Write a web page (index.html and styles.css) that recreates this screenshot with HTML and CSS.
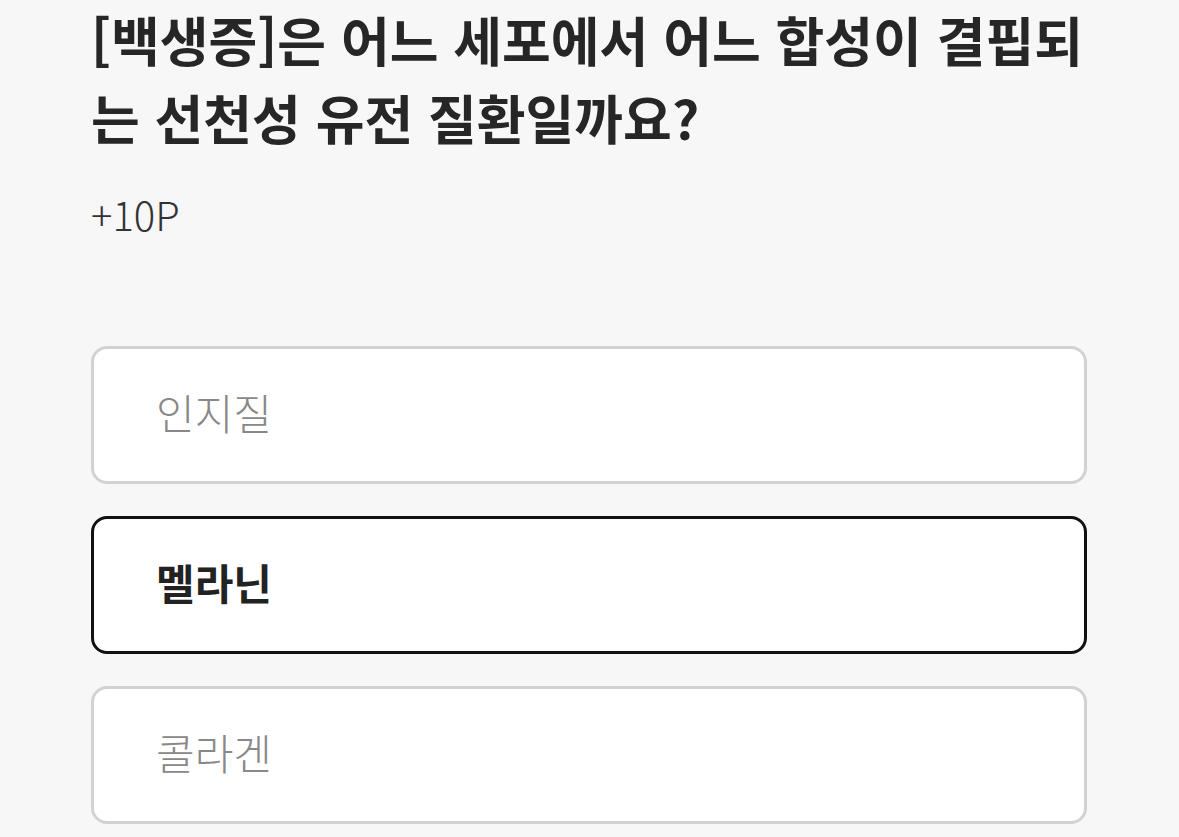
FILE: index.html
```html
<!DOCTYPE html>
<html lang="ko">
<head>
    <meta charset="UTF-8">
    <meta name="viewport" content="width=device-width, initial-scale=1.0">
    <title>퀴즈</title>
    <link rel="stylesheet" href="styles.css">
</head>
<body>

<div class="quiz">
    <h2 class="question">[백생증]은 어느 세포에서 어느 합성이 결핍되는 선천성 유전 질환일까요?</h2>
    <p class="point">+10P</p>

    <div class="options">
        <div class="option">인지질</div>
        <div class="option selected">멜라닌</div>
        <div class="option">콜라겐</div>
    </div>
</div>

</body>
</html>
```

FILE: styles.css
```css
body {
    margin: 0;
    background-color: #f7f7f7;
    font-family: "Noto Sans CJK KR", "Noto Sans", sans-serif;
    color: #222;
}
.quiz {
    width: 996px;
    padding: 0 0 0 91px;
}
.question {
    margin: 0;
    font-size: 53px;
    font-weight: bold;
    line-height: 78px;
    color: #262626;
}
.point {
    margin: 28px 0 0;
    font-size: 40px;
    line-height: 60px;
    font-weight: 300;
    color: #333;
}
.options {
    display: flex;
    flex-direction: column;
    gap: 32px;
    margin-top: 102px;
}
.option {
    box-sizing: border-box;
    height: 138px;
    display: flex;
    align-items: center;
    padding: 0 0 8px 62px;
    background: white;
    border: 3px solid #d2d2d2;
    border-radius: 16px;
    font-size: 42px;
    font-weight: 300;
    color: #888;
}
.option.selected {
    border-color: #111;
    font-weight: bold;
    color: #222;
}
```
